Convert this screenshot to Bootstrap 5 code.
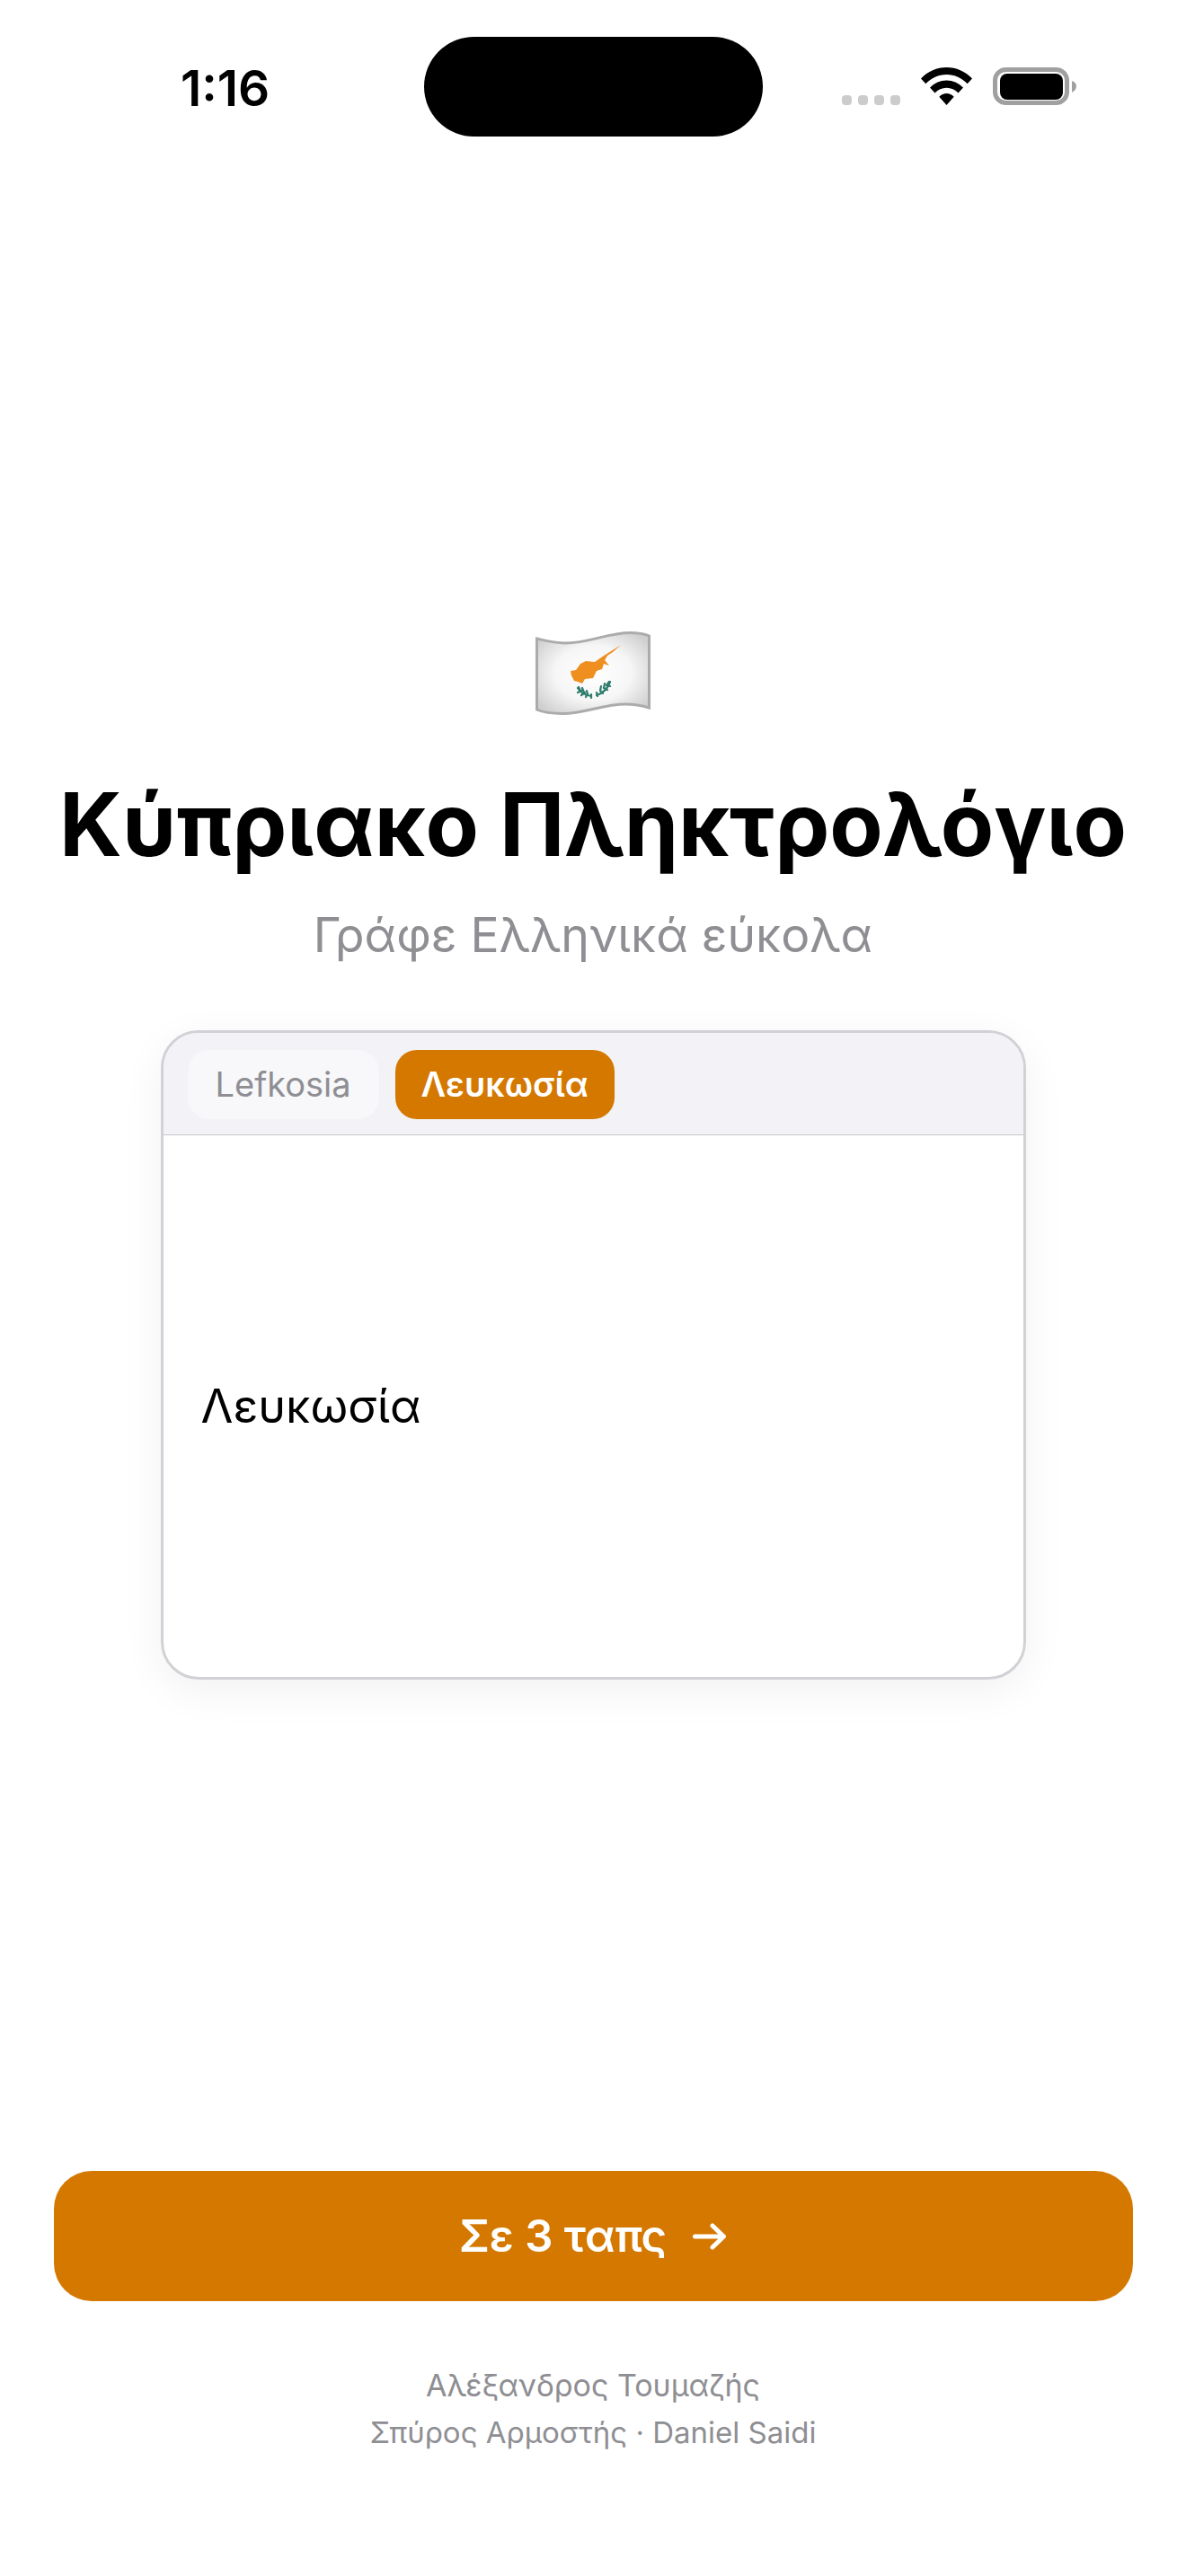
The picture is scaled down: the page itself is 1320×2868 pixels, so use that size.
<!DOCTYPE html>
<html lang="el">
<head>
<meta charset="utf-8">
<title>Κύπριακο Πληκτρολόγιο</title>
<link href="https://cdn.jsdelivr.net/npm/bootstrap@5.3.0/dist/css/bootstrap.min.css" rel="stylesheet">
<style>
html,body{margin:0;background:#fff;}
body{font-family:"Inter","Noto Sans",sans-serif;}
.app-screen{width:1320px;height:2868px;overflow:hidden;}
.status-row{padding:41px 0 0 201px;}
.clock{width:271px;font-size:55px;font-weight:600;line-height:111px;height:111px;color:#000;letter-spacing:0;padding-top:2px;}
.island{width:377px;height:111px;border-radius:56px;background:#000;}
.status-icons{margin:34px 0 0 88px;height:42px;}
.net-dots{gap:7px;margin-right:23px;}
.net-dots i{display:block;width:11px;height:11px;border-radius:4px;background:#cccccc;}
.status-batt{margin-left:23px;}
.flag-art{display:block;width:128px;height:93px;margin-top:551px;}
.hero-title{font-size:97px;font-weight:700;line-height:116px;margin:64px 0 0;color:#000;letter-spacing:0;}
.hero-sub{font-size:53.5px;line-height:70px;margin:30px 0 0;color:#8e8e93;}
.demo-card{width:963px;height:723px;margin-top:71px;border:3px solid #d1d1d6;border-radius:42px;box-shadow:0 12px 48px rgba(0,0,0,.06);overflow:hidden;background:#fff;}
.demo-head{height:114px;padding:19px 0 0 27px;gap:18px;background:#f2f2f7;border-bottom:1px solid #c6c6c8;border-radius:0;}
.demo-tab{height:77px;border-radius:24px;border:0;font-size:38px;line-height:77px;padding:0 31px;}
.tab-off{background:#f8f8fb;color:#8e8e93;}
.tab-on{background:#d47800;color:#fff;font-weight:600;padding:0 29px;}
.demo-text{padding:0 0 0 42px;font-size:52px;line-height:66px;color:#000;}
.go-btn{width:1201px;height:145px;margin-top:auto;border:0;border-radius:42px;background:#d47800;color:#fff;font-size:49px;font-weight:600;gap:29px;padding:0;}
.go-btn:hover{background:#d47800;color:#fff;}
.credits{margin:68px 0 0;padding-bottom:134px;color:#8e8e93;font-size:34px;line-height:52px;text-align:center;}
.credits-two{font-size:33px;}
</style>
</head>
<body>
<div class="app-screen d-flex flex-column">
  <div class="status-row d-flex align-items-start">
    <div class="clock">1:16</div>
    <div class="island"></div>
    <div class="status-icons d-flex align-items-end">
      <div class="net-dots d-flex align-items-end"><i></i><i></i><i></i><i></i></div>
      <svg width="57" height="42" viewBox="0 0 57 42" class="d-block">
        <path d="M28.5 0C17.5 0 8 4.300 0 12.500L5.300 18.300C11.500 11.800 19.500 8 28.500 8S45.500 11.800 51.700 18.300L57 12.500C49 4.300 39.500 0 28.500 0Z" fill="#000"/>
        <path d="M28.500 14.500C21.500 14.500 15.300 17.300 10 22.500L15.500 28.500C19 25 23.500 22.800 28.500 22.800S38 25 41.500 28.500L47 22.500C41.700 17.300 35.500 14.500 28.500 14.500Z" fill="#000"/>
        <path d="M28.500 29C25.500 29 22.700 30.200 20.300 32.700L28.500 42L36.700 32.700C34.300 30.200 31.500 29 28.500 29Z" fill="#000"/>
      </svg>
      <svg width="95" height="42" viewBox="0 0 95 42" class="d-block status-batt">
        <rect x="2.500" y="2.500" width="80" height="37" rx="12" fill="none" stroke="#a0a0a0" stroke-width="5"/>
        <rect x="8" y="7" width="70" height="29" rx="8" fill="#000"/>
        <path d="M88 15C91 16 93 18 93 21S91 26 88 28Z" fill="#a0a0a0"/>
      </svg>
    </div>
  </div>
  <main class="d-flex flex-column align-items-center flex-grow-1">
    <svg class="flag-art" viewBox="0 0 128 93" role="img" aria-label="Σημαία Κύπρου">
      <defs>
        <radialGradient id="cloth" cx="50%" cy="50%" r="62%">
          <stop offset="0" stop-color="#ffffff"/>
          <stop offset=".55" stop-color="#f6f6f6"/>
          <stop offset="1" stop-color="#cfcfcf"/>
        </radialGradient>
      </defs>
      <path d="M1.500 8C10 10 20 13 33 13C60 13 80 1.500 105 1.500C115 1.500 122 3 126.500 5L126.500 85C120 83 112 81 100 81C75 81 55 91.500 30 91.500C18 91.500 8 90 1.500 87Z" fill="url(#cloth)" stroke="#ababab" stroke-width="3"/>
      <path d="M95 15L86 23L80 27L77 32L82 38L76 36L74 42L68 44L64 52L55 53L52 58L47 56L43 55L40 49L39 44L45 43L50 36L56 33L66 34L76 27L84 22Z" fill="#ee8f20"/>
      <g fill="none" stroke="#2f7d6d" stroke-width="2.200" stroke-linecap="round">
        <path d="M47 63C50 68 55 71 62 72"/>
        <path d="M83 56C81 63 75 69 68 71"/>
        <path d="M47 68L51 66M48 62L50 66M51 71L55 68M52 63L54 68M56 73L58 69M57 66L58 70M62 74L62 70"/>
        <path d="M83 61L79 60M82 56L79 60M80 65L76 63M77 58L76 63M75 69L72 66M73 61L72 66M69 72L68 68"/>
      </g>
    </svg>
    <h1 class="hero-title">Κύπριακο Πληκτρολόγιο</h1>
    <p class="hero-sub">Γράφε Ελληνικά εύκολα</p>
    <div class="card demo-card">
      <div class="card-header demo-head d-flex align-items-start">
        <span class="btn demo-tab tab-off">Lefkosia</span>
        <span class="btn demo-tab tab-on">Λευκωσία</span>
      </div>
      <div class="card-body demo-text d-flex align-items-center">Λευκωσία</div>
    </div>
    <button type="button" class="btn go-btn d-flex align-items-center justify-content-center">
      <span>Σε 3 ταπς</span>
      <svg width="38" height="30" viewBox="0 0 38 30" class="d-block"><path d="M2.500 15H34M22 3L34.500 15L22 27" fill="none" stroke="#fff" stroke-width="5" stroke-linecap="round" stroke-linejoin="round"/></svg>
    </button>
    <div class="credits">
      <div>Αλέξανδρος Τουμαζής</div>
      <div class="credits-two">Σπύρος Αρμοστής · Daniel Saidi</div>
    </div>
  </main>
</div>
<script src="https://cdn.jsdelivr.net/npm/bootstrap@5.3.0/dist/js/bootstrap.bundle.min.js"></script>
</body>
</html>
